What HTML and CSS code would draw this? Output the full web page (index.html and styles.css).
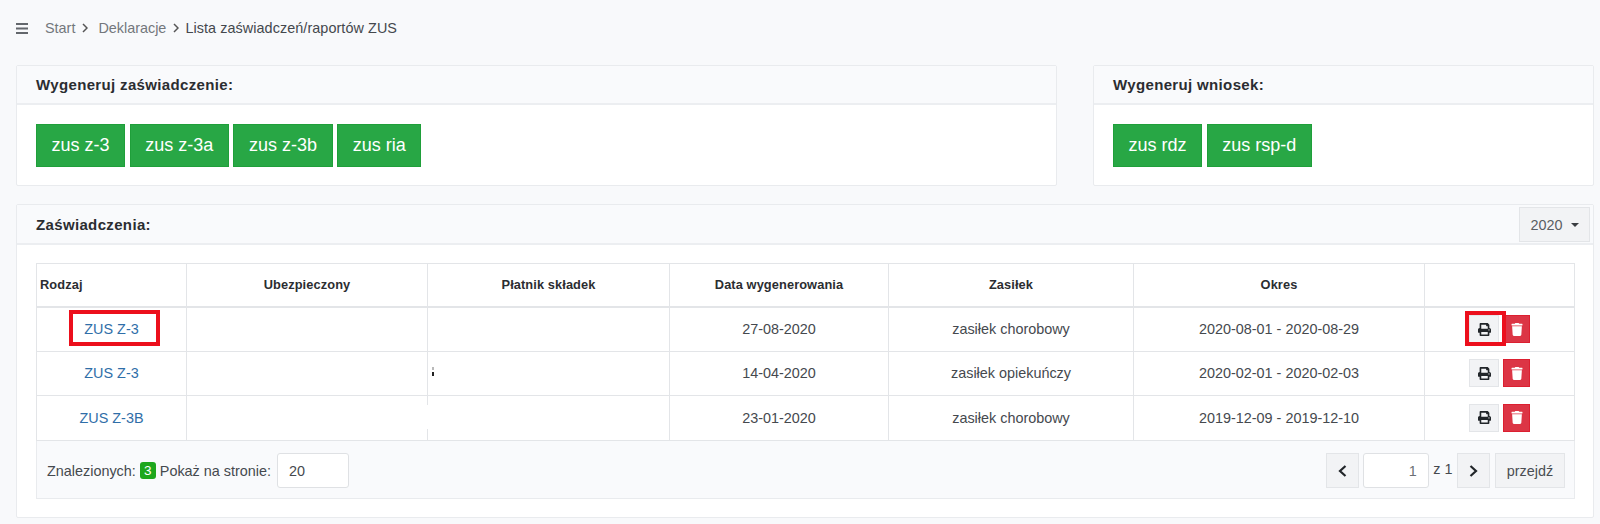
FILE: index.html
```html
<!DOCTYPE html>
<html lang="pl">
<head>
<meta charset="utf-8">
<title>Lista zaświadczeń/raportów ZUS</title>
<link rel="stylesheet" href="styles.css">
</head>
<body>
<nav class="crumbs">
  <svg class="burger" width="12" height="11" viewBox="0 0 12 11"><path d="M0 0h12v2H0zM0 4.5h12v2H0zM0 9h12v2H0z" fill="#63676c"/></svg>
  <span class="crumb">Start</span><svg class="sep first" width="6" height="10" viewBox="0 0 6 10"><path d="M1 1l4 4-4 4" fill="none" stroke="#555" stroke-width="1.5"/></svg>
  <span class="crumb">Deklaracje</span><svg class="sep" width="6" height="10" viewBox="0 0 6 10"><path d="M1 1l4 4-4 4" fill="none" stroke="#555" stroke-width="1.5"/></svg>
  <span class="crumb current">Lista zaświadczeń/raportów ZUS</span>
</nav>
<div class="top-row">
  <section class="card wide">
    <header class="card-head">Wygeneruj zaświadczenie:</header>
    <div class="card-body">
      <a class="gen">zus z-3</a><a class="gen">zus z-3a</a><a class="gen">zus z-3b</a><a class="gen">zus ria</a>
    </div>
  </section>
  <section class="card narrow">
    <header class="card-head">Wygeneruj wniosek:</header>
    <div class="card-body">
      <a class="gen">zus rdz</a><a class="gen">zus rsp-d</a>
    </div>
  </section>
</div>
<section class="card list">
  <header class="card-head with-select">
    <span>Zaświadczenia:</span>
    <button class="year">2020<i class="caret"></i></button>
  </header>
  <div class="list-body">
    <table class="grid">
      <colgroup><col class="c1"><col class="c2"><col class="c3"><col class="c4"><col class="c5"><col class="c6"><col class="c7"></colgroup>
      <thead>
        <tr><th class="left">Rodzaj</th><th>Ubezpieczony</th><th>Płatnik składek</th><th>Data wygenerowania</th><th>Zasiłek</th><th>Okres</th><th></th></tr>
      </thead>
      <tbody>
        <tr>
          <td class="anchor"><a class="doc">ZUS Z-3</a><span class="mark mark-doc"></span></td><td></td><td></td><td>27-08-2020</td><td>zasiłek chorobowy</td><td>2020-08-01 - 2020-08-29</td>
          <td class="acts anchor"><button class="icon print"><svg width="13" height="13" viewBox="0 0 512 512"><use href="#printer"/></svg></button><button class="icon del"><svg width="12" height="13" viewBox="0 0 448 512"><use href="#trash"/></svg></button><span class="mark mark-print"></span></td>
        </tr>
        <tr>
          <td><a class="doc">ZUS Z-3</a></td><td></td><td class="anchor"><span class="scrap"></span></td><td>14-04-2020</td><td>zasiłek opiekuńczy</td><td>2020-02-01 - 2020-02-03</td>
          <td class="acts"><button class="icon print"><svg width="13" height="13" viewBox="0 0 512 512"><use href="#printer"/></svg></button><button class="icon del"><svg width="12" height="13" viewBox="0 0 448 512"><use href="#trash"/></svg></button></td>
        </tr>
        <tr>
          <td><a class="doc">ZUS Z-3B</a></td><td></td><td class="anchor"><span class="erase"></span></td><td>23-01-2020</td><td>zasiłek chorobowy</td><td>2019-12-09 - 2019-12-10</td>
          <td class="acts"><button class="icon print"><svg width="13" height="13" viewBox="0 0 512 512"><use href="#printer"/></svg></button><button class="icon del"><svg width="12" height="13" viewBox="0 0 448 512"><use href="#trash"/></svg></button></td>
        </tr>
      </tbody>
    </table>
    <footer class="pager">
      <div class="found">
        <span>Znalezionych:</span><span class="badge">3</span><span>Pokaż na stronie:</span>
        <div class="field per">20</div>
      </div>
      <div class="nav">
        <button class="pg arrow"><svg width="9" height="12" viewBox="0 0 9 12"><path d="M7.5 1L2 6l5.500 5" fill="none" stroke="#212529" stroke-width="2.200"/></svg></button>
        <div class="field page">1</div>
        <span class="of">z 1</span>
        <button class="pg arrow"><svg width="9" height="12" viewBox="0 0 9 12"><path d="M1.500 1L7 6l-5.500 5" fill="none" stroke="#212529" stroke-width="2.200"/></svg></button>
        <button class="pg go">przejdź</button>
      </div>
    </footer>
  </div>
</section>
<svg class="defs" width="0" height="0">
  <symbol id="printer" viewBox="0 0 512 512">
    <path fill="#212529" d="M448 192V77.25c0-8.49-3.37-16.62-9.37-22.63L393.37 9.37c-6-6-14.14-9.37-22.63-9.37H96C78.33 0 64 14.33 64 32v160c-35.35 0-64 28.65-64 64v112c0 8.84 7.16 16 16 16h48v96c0 17.67 14.33 32 32 32h320c17.67 0 32-14.33 32-32v-96h48c8.84 0 16-7.16 16-16V256c0-35.35-28.65-64-64-64zm-64 256H128v-96h256v96zm0-224H128V64h192v48c0 8.84 7.16 16 16 16h48v96zm48 72c-13.25 0-24-10.75-24-24 0-13.26 10.75-24 24-24s24 10.74 24 24c0 13.25-10.75 24-24 24z"/>
  </symbol>
  <symbol id="trash" viewBox="0 0 448 512">
    <path fill="#fff" d="M432 32H312l-9.4-18.7A24 24 0 0 0 281.1 0H166.8a23.72 23.72 0 0 0-21.4 13.3L136 32H16A16 16 0 0 0 0 48v32a16 16 0 0 0 16 16h416a16 16 0 0 0 16-16V48a16 16 0 0 0-16-16zM53.2 467a48 48 0 0 0 47.9 45h245.8a48 48 0 0 0 47.9-45L416 128H32z"/>
  </symbol>
</svg>
</body>
</html>
```
FILE: styles.css
```css
* { box-sizing: border-box; }
html, body { margin: 0; }
body {
  height: 524px;
  overflow: hidden;
  padding: 0 6px 0 16px;
  background: #f8f9fb;
  font-family: "Liberation Sans", Arial, sans-serif;
  font-size: 14.4px;
  color: #45494e;
}
.crumbs {
  display: flex;
  align-items: center;
  height: 56px;
  margin-bottom: 9px;
  color: #73777c;
}
.burger { margin: 0 17px 0 0; }
.crumb.current { color: #44484d; letter-spacing: .07px; }
.sep { margin: 0 6px 0 7px; }
.sep.first { margin-right: 10px; }
.top-row {
  display: flex;
  justify-content: space-between;
  margin-bottom: 18px;
}
.card {
  background: #fff;
  border: 1px solid #e9ebee;
  border-radius: 2px;
}
.wide { width: 1041px; }
.narrow { width: 501px; }
.card-head {
  height: 39px;
  padding: 0 19px;
  display: flex;
  align-items: center;
  background: #f9fafc;
  border-bottom: 2px solid #eceef1;
  font-size: 15px;
  font-weight: 700;
  color: #2b2d31;
  letter-spacing: .35px;
}
.card-body {
  display: flex;
  gap: 4.500px;
  padding: 19px;
  height: 80px;
}
.gen {
  display: flex;
  align-items: center;
  padding: 0 14.600px;
  height: 43px;
  background: #28a745;
  border: 1px solid #1f9f3a;
  color: #fff;
  font-size: 18px;
}
.with-select { justify-content: space-between; padding-right: 3px; height: 40px; }
.year {
  width: 71px;
  height: 35px;
  margin-top: 1px;
  display: flex;
  align-items: center;
  justify-content: center;
  background: #f2f3f5;
  border: 1px solid #e3e5e8;
  font: inherit;
  font-size: 14.4px;
  font-weight: 400;
  letter-spacing: 0;
  color: #5a5e63;
}
.caret {
  margin-left: 8px;
  border-top: 4px solid #3a3d41;
  border-left: 4px solid transparent;
  border-right: 4px solid transparent;
}
.list-body { padding: 18px 18px 18px 19px; }
.grid {
  width: 1539px;
  table-layout: fixed;
  border-collapse: collapse;
  border: 1px solid #e3e5e8;
}
.c1 { width: 150px; }
.c2 { width: 241px; }
.c3 { width: 242px; }
.c4 { width: 219px; }
.c5 { width: 245px; }
.c6 { width: 291px; }
.grid th, .grid td {
  border: 1px solid #e3e5e8;
  text-align: center;
  padding: 0;
  height: 44.5px;
}
.grid th {
  height: 43px;
  border-bottom-width: 2px;
  font-size: 12.8px;
  color: #2b2d31;
  letter-spacing: .1px;
}
.grid th.left { text-align: left; padding-left: 3px; }
.doc { color: #2f6ea8; }
.anchor { position: relative; }
.mark {
  position: absolute;
  border: 4px solid #ec0f1c;
}
.mark-doc { left: 32px; top: 2px; width: 91px; height: 36px; }
.mark-print { left: 40px; top: 3px; width: 41px; height: 35px; }
.scrap {
  position: absolute;
  left: 4px;
  top: 15px;
  width: 2px;
  height: 9px;
  background: linear-gradient(#b9b9b9 0 3px, #fff 3px 5px, #222 5px);
}
.erase {
  position: absolute;
  left: -2px;
  top: 9px;
  width: 4px;
  height: 24px;
  background: #fff;
}
.acts .icon { vertical-align: middle; }
.icon {
  width: 30px;
  height: 28px;
  padding: 0;
  display: inline-flex;
  align-items: center;
  justify-content: center;
  border: 1px solid #e3e5e8;
  background: #f2f3f5;
}
.del {
  width: 27px;
  background: #dc3545;
  border-color: #dc1f30;
  margin-left: 4px;
}
.pager {
  display: flex;
  justify-content: space-between;
  align-items: center;
  width: 1539px;
  height: 58px;
  padding: 3px 9px 0 10px;
  background: #f9fafc;
  border: 1px solid #e9ebee;
  border-top: 0;
}
.found { display: flex; align-items: center; }
.badge {
  width: 16px;
  height: 17px;
  margin: 0 4px 0 4px;
  display: flex;
  align-items: center;
  justify-content: center;
  background: #1ea71e;
  border-radius: 3px;
  color: #fff;
  font-size: 13.5px;
}
.field {
  height: 35px;
  background: #fff;
  border: 1px solid #dfe1e4;
  border-radius: 3px;
  display: flex;
  align-items: center;
}
.per { width: 72px; margin-left: 6px; padding-left: 11px; }
.nav { display: flex; align-items: center; }
.pg {
  height: 35px;
  padding: 0;
  background: #f2f3f5;
  border: 1px solid #e3e5e8;
  font: inherit;
  color: #4a4e53;
  display: flex;
  align-items: center;
  justify-content: center;
}
.arrow { width: 33px; }
.page { width: 66px; margin-left: 4px; justify-content: flex-end; padding-right: 11px; color: #6b6f74; }
.of { margin: -3px 4.500px 0; }
.go { width: 70px; margin-left: 5px; }
.defs { position: absolute; }
```
